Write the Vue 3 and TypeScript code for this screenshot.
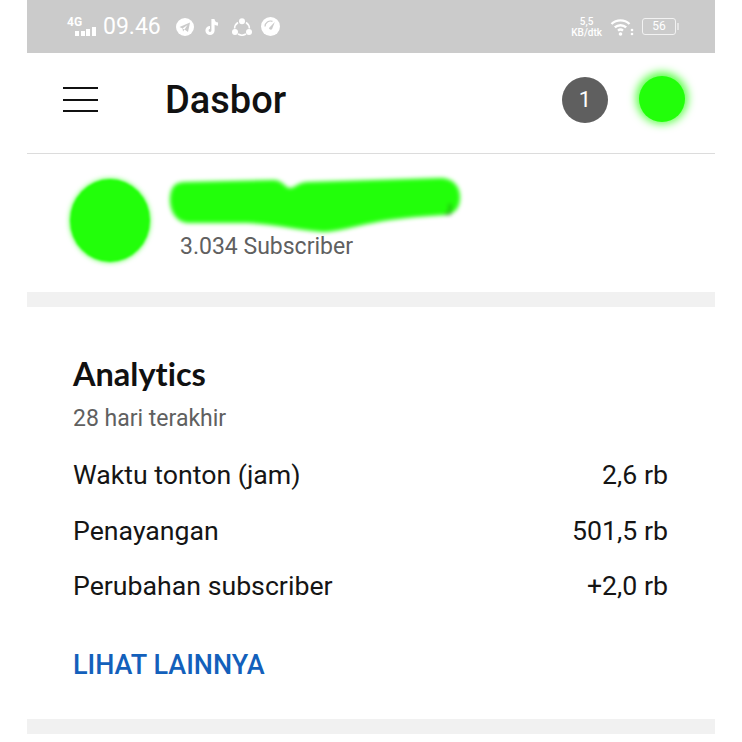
<script setup lang="ts">
const stats = [
  { label: "Waktu tonton (jam)", value: "2,6 rb" },
  { label: "Penayangan", value: "501,5 rb" },
  { label: "Perubahan subscriber", value: "+2,0 rb" },
];
</script>

<template>
  <div class="page">
    <div class="phone">
      <div class="status">
        <div class="status-left">
          <svg class="signal" width="31" height="22" viewBox="0 0 31 22">
            <text x="1" y="10" class="net">4G</text>
            <rect x="9" y="15" width="4" height="5" />
            <rect x="15" y="15" width="4" height="5" />
            <rect x="20" y="13" width="4" height="7" />
            <rect x="26" y="11" width="4" height="9" />
          </svg>
          <span class="time">09.46</span>
          <div class="app-icons">
            <svg width="18" height="18" viewBox="0 0 18 18">
              <circle cx="9" cy="9" r="9" fill="#fff" />
              <path d="M3.5 9 14 4.5 12 14 8.5 11.5 7 13.5 6.5 10.5Z" fill="#cbcbcb" />
              <path d="M6.5 10.5 11.5 7 8.5 11.5Z" fill="#fff" />
            </svg>
            <svg width="16" height="18" viewBox="0 0 16 18">
              <path d="M8 1V12.5A3 3 0 1 1 5 9.5M8 2C8.6 4.6 10.4 6 13 6.2" fill="none" stroke="#fff" stroke-width="3.2" />
            </svg>
            <svg width="20" height="18" viewBox="0 0 20 18">
              <path d="M6 4.5A7.5 7.5 0 0 0 2.6 10.5M14 4.5A7.5 7.5 0 0 1 17.4 10.5M6 16A7.5 7.5 0 0 0 14 16" fill="none" stroke="#fff" stroke-width="1.6" />
              <circle cx="10" cy="3.2" r="3" fill="#fff" />
              <circle cx="3" cy="14" r="3" fill="#fff" />
              <circle cx="17" cy="14" r="3" fill="#fff" />
            </svg>
            <svg class="gauge" width="19" height="19" viewBox="0 0 19 19">
              <circle cx="9.5" cy="9.5" r="9.5" fill="#fff" />
              <path d="M4 9.5A5.5 5.5 0 0 1 11.5 4.4" fill="none" stroke="#cbcbcb" stroke-width="1.2" />
              <path d="M8 11 13.8 5 11 12.2A1.8 1.8 0 0 1 8 11Z" fill="#cbcbcb" />
            </svg>
          </div>
        </div>
        <div class="status-right">
          <div class="speed"><span>5,5</span><span>KB/dtk</span></div>
          <svg width="24" height="18" viewBox="0 0 24 18">
            <path d="M1.5 6A13 13 0 0 1 19.5 6M4.8 9.4A8.5 8.5 0 0 1 16.2 9.4M8 12.6A4 4 0 0 1 13 12.6" fill="none" stroke="#fff" stroke-width="2.4" />
            <circle cx="10.5" cy="16" r="1.8" fill="#fff" />
            <circle cx="22" cy="12" r="1.3" fill="#fff" />
            <circle cx="22" cy="16" r="1.3" fill="#fff" />
          </svg>
          <div class="battery"><span>56</span></div>
        </div>
      </div>

      <header class="topbar">
        <div class="menu"><i></i><i></i><i></i></div>
        <h1>Dasbor</h1>
        <div class="badge">1</div>
        <div class="blob account"></div>
      </header>

      <section class="channel">
        <div class="blob channel-pic"></div>
        <div class="channel-info">
          <svg class="scribble" width="300" height="60" viewBox="0 0 300 60">
            <path d="M5 21C6 11 10 6 20 6L108 4C118 4 120 12 125 12 130 12 132 7 142 6L275 2C288 2 295 10 295 21 295 32 290 38 280 39 250 41 228 43 208 47 190 50 172 56 158 56 136 55 110 48 82 47L22 47C10 46 4 33 5 21Z" fill="#22ff0a" />
            <path d="M285 28V38H280" fill="none" stroke="#1c7a10" stroke-width="1.4" />
          </svg>
          <div class="subs">3.034 Subscriber</div>
        </div>
      </section>

      <div class="divider"></div>

      <section class="analytics">
        <h2>Analytics</h2>
        <div class="period">28 hari terakhir</div>
        <div class="rows">
          <div v-for="stat in stats" :key="stat.label" class="row">
            <span>{{ stat.label }}</span>
            <span>{{ stat.value }}</span>
          </div>
        </div>
        <a class="more">LIHAT LAINNYA</a>
      </section>

      <div class="divider"></div>
    </div>
  </div>
</template>

<style scoped>
.page {
  width: 742px;
  height: 742px;
  background: #fff;
  padding: 0 27px;
  box-sizing: border-box;
  overflow: hidden;
  font-family: Roboto, "Liberation Sans", sans-serif;
}

.phone {
  width: 688px;
}

.status {
  height: 53px;
  background: #cbcbcb;
  display: flex;
  align-items: center;
  justify-content: space-between;
  color: #fff;
  padding: 0 39px 0 39px;
  box-sizing: border-box;
}

.status-left,
.status-right,
.app-icons {
  display: flex;
  align-items: center;
}

.signal {
  fill: #fff;
  margin-right: 6px;
}

.net {
  font-size: 12px;
  font-weight: 700;
}

.time {
  font-size: 23px;
}

.app-icons {
  gap: 11px;
  margin-left: 15px;
}

.gauge {
  margin-left: -2px;
}

.status-right {
  gap: 8px;
}

.speed {
  display: flex;
  flex-direction: column;
  align-items: center;
  font-size: 10px;
  font-weight: 500;
  line-height: 11px;
}

.battery {
  width: 32px;
  height: 15px;
  border: 1.5px solid #f2f2f2;
  border-radius: 3px;
  font-size: 12px;
  line-height: 15px;
  text-align: center;
  position: relative;
}

.battery::after {
  content: "";
  position: absolute;
  right: -4px;
  top: 4px;
  width: 2px;
  height: 7px;
  background: #e4e4e4;
}

.topbar {
  height: 101px;
  border-bottom: 1px solid #dcdcdc;
  display: flex;
  align-items: center;
  padding: 0 30px 7px 36px;
  box-sizing: border-box;
}

.menu {
  width: 35px;
  display: flex;
  flex-direction: column;
  gap: 9.5px;
}

.menu i {
  height: 2px;
  background: #111;
}

h1 {
  margin: 0 0 0 67px;
  font-size: 38px;
  font-weight: 500;
  color: #111;
  flex: 1;
}

.badge {
  width: 46px;
  height: 46px;
  border-radius: 50%;
  background: #5f5f5f;
  color: #fff;
  font-size: 22px;
  display: flex;
  align-items: center;
  justify-content: center;
  margin-right: 31px;
}

.blob {
  background: #22ff0a;
  border-radius: 50%;
}

.account {
  width: 46px;
  height: 46px;
  margin-top: -2px;
  box-shadow: 0 -1px 8px 3px #5dff4a;
}

.channel {
  height: 138px;
  display: flex;
  align-items: flex-start;
  padding: 25px 0 0 43px;
  box-sizing: border-box;
}

.channel-pic {
  width: 80px;
  height: 83px;
  box-shadow: 0 0 4px 1px #7dff70;
  margin-right: 15px;
  filter: blur(1.2px);
}

.channel-info {
  margin-top: -3px;
}

.scribble {
  display: block;
  filter: blur(2.2px);
}

.subs {
  font-size: 23px;
  line-height: 28px;
  color: #606060;
  margin-left: 15px;
  margin-top: -3px;
}

.divider {
  height: 15px;
  background: #f1f1f1;
}

.analytics {
  height: 412px;
  box-sizing: border-box;
  padding: 48px 47px 0 46px;
}

h2 {
  margin: 0;
  font-family: Lato, sans-serif;
  font-size: 32.5px;
  font-weight: 700;
  font-variant-ligatures: none;
  color: #111;
  line-height: 38px;
}

.period {
  font-size: 23px;
  color: #606060;
  margin-top: 12px;
}

.rows {
  margin-top: 28px;
  display: flex;
  flex-direction: column;
  gap: 25.5px;
}

.row {
  display: flex;
  justify-content: space-between;
  font-size: 26.7px;
  line-height: 30px;
  color: #151515;
}

.more {
  display: block;
  margin-top: 48px;
  font-size: 27px;
  line-height: 32px;
  font-weight: 500;
  color: #1360bb;
}
</style>
